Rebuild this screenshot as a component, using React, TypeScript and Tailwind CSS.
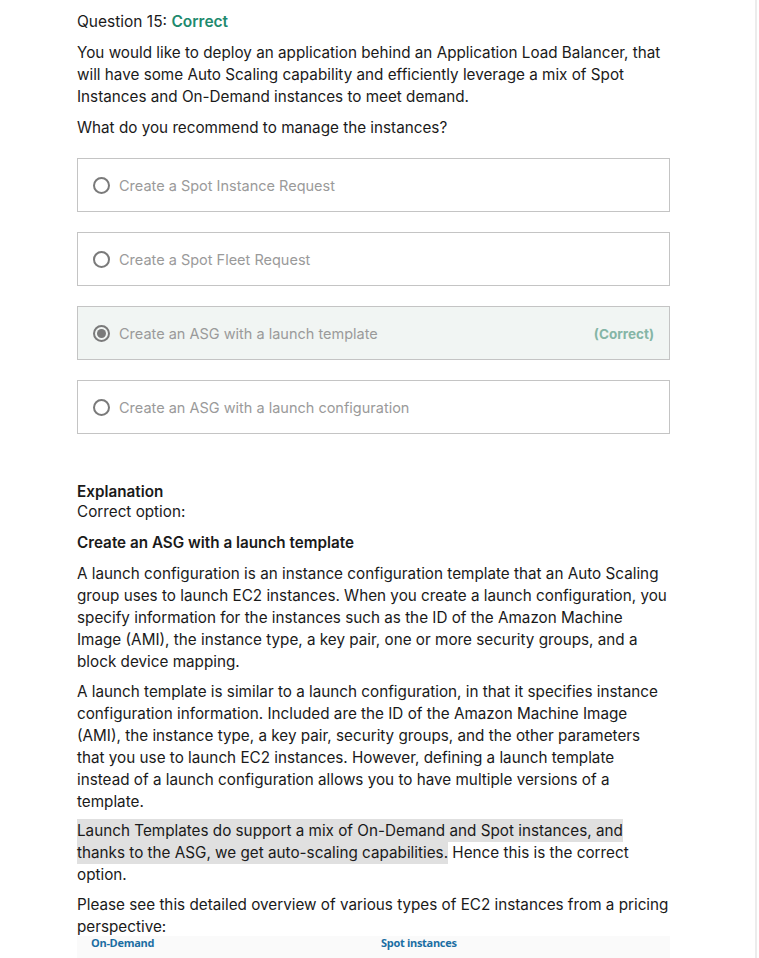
import React from "react";

const options = [
  { label: "Create a Spot Instance Request", selected: false },
  { label: "Create a Spot Fleet Request", selected: false },
  { label: "Create an ASG with a launch template", selected: true },
  { label: "Create an ASG with a launch configuration", selected: false },
];

function Radio({ checked }: { checked: boolean }) {
  return (
    <span className="flex h-[17px] w-[17px] shrink-0 items-center justify-center rounded-full border-2 border-[#7a7a7a]">
      {checked && <span className="h-[9px] w-[9px] rounded-full bg-[#7a7a7a]" />}
    </span>
  );
}

export default function App() {
  return (
    <div className="min-h-[958px] w-[757px] border-r-2 border-[#ececec] bg-white font-['Inter',sans-serif] text-[15.25px] leading-[22px] text-[#1a1a1a]">
      <div className="ml-[77px] w-[593px] pt-[11px]">
        <p className="text-[15.5px]">
          Question 15: <span className="font-semibold text-[#1e8a6e]">Correct</span>
        </p>
        <p className="mt-[9px]">
          You would like to deploy an application behind an Application Load Balancer, that will
          have some Auto Scaling capability and efficiently leverage a mix of Spot Instances and
          On-Demand instances to meet demand.
        </p>
        <p className="mt-[9px]">What do you recommend to manage the instances?</p>

        <div className="mt-[19px] flex flex-col gap-[20px]">
          {options.map((o) => (
            <div
              key={o.label}
              className={
                "flex h-[54px] items-center border border-[#c4c4c4] pl-[15px] pr-[15px] text-[14.5px] text-[#9a9a9a] " +
                (o.selected ? "bg-[#f1f5f3]" : "bg-white")
              }
            >
              <Radio checked={o.selected} />
              <span className="ml-[9px] flex-1 pt-[2px]">{o.label}</span>
              {o.selected && (
                <span className="pt-[1px] text-[13.5px] font-bold text-[#85b5a6]">(Correct)</span>
              )}
            </div>
          ))}
        </div>

        <div className="mt-[48px] leading-[20px]">
          <p className="font-semibold">Explanation</p>
          <p>Correct option:</p>
        </div>
        <p className="mt-[10px] font-semibold">Create an ASG with a launch template</p>
        <p className="mt-[9px]">
          A launch configuration is an instance configuration template that an Auto Scaling group
          uses to launch EC2 instances. When you create a launch configuration, you specify
          information for the instances such as the ID of the Amazon Machine Image (AMI), the
          instance type, a key pair, one or more security groups, and a block device mapping.
        </p>
        <p className="mt-[8px]">
          A launch template is similar to a launch configuration, in that it specifies instance
          configuration information. Included are the ID of the Amazon Machine Image (AMI), the
          instance type, a key pair, security groups, and the other parameters that you use to
          launch EC2 instances. However, defining a launch template instead of a launch
          configuration allows you to have multiple versions of a template.
        </p>
        <p className="mt-[7px]">
          <span className="bg-[#e0e0e0] py-[2px]">
            Launch Templates do support a mix of On-Demand and Spot instances, and thanks to the
            ASG, we get auto-scaling capabilities.
          </span>{" "}
          Hence this is the correct option.
        </p>
        <p className="mt-[8px]">
          Please see this detailed overview of various types of EC2 instances from a pricing
          perspective:
        </p>
        <div className="-mt-[2px] h-[40px] bg-[#fafafa]">
          <div className="flex pt-[1px] font-['Open_Sans',sans-serif] text-[11px] font-bold leading-[12px] tracking-[-0.3px] text-[#1b6ea3]">
            <span className="ml-[14px] w-[290px]">On-Demand</span>
            <span>Spot instances</span>
          </div>
        </div>
      </div>
    </div>
  );
}
